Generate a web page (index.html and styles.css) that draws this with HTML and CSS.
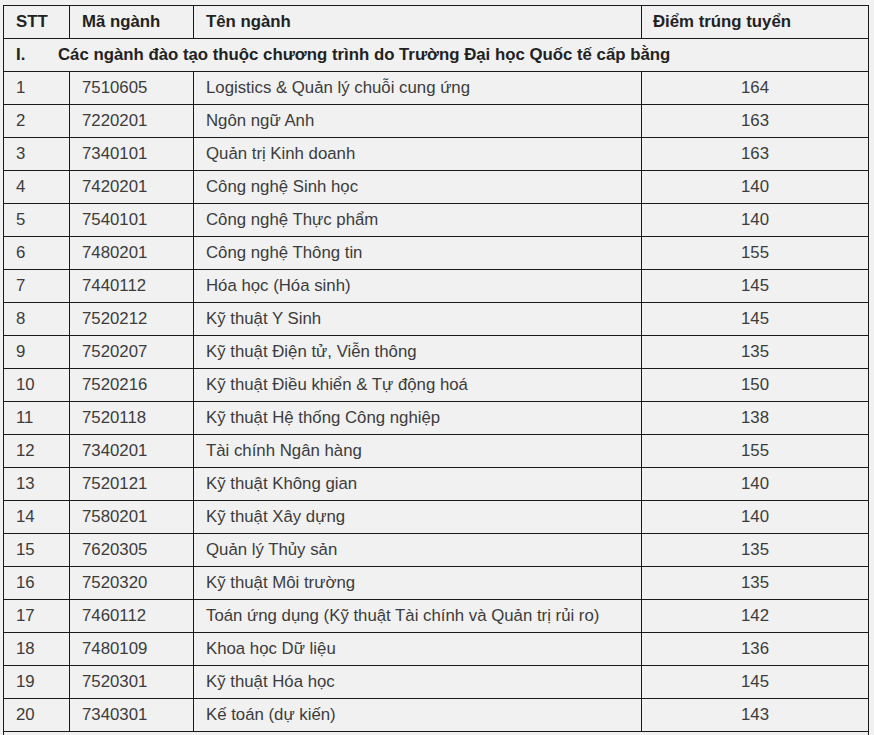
FILE: index.html
```html
<!DOCTYPE html>
<html lang="vi">
<head>
<meta charset="utf-8">
<link rel="stylesheet" href="styles.css">
</head>
<body>
<table class="scores">
<colgroup><col class="c-stt"><col class="c-code"><col class="c-name"><col class="c-score"></colgroup>
<thead>
<tr><th>STT</th><th>Mã ngành</th><th>Tên ngành</th><th>Điểm trúng tuyển</th></tr>
</thead>
<tbody>
<tr class="section"><td colspan="4"><span class="num">I.</span>Các ngành đào tạo thuộc chương trình do Trường Đại học Quốc tế cấp bằng</td></tr>
<tr><td>1</td><td>7510605</td><td>Logistics &amp; Quản lý chuỗi cung ứng</td><td class="score">164</td></tr>
<tr><td>2</td><td>7220201</td><td>Ngôn ngữ Anh</td><td class="score">163</td></tr>
<tr><td>3</td><td>7340101</td><td>Quản trị Kinh doanh</td><td class="score">163</td></tr>
<tr><td>4</td><td>7420201</td><td>Công nghệ Sinh học</td><td class="score">140</td></tr>
<tr><td>5</td><td>7540101</td><td>Công nghệ Thực phẩm</td><td class="score">140</td></tr>
<tr><td>6</td><td>7480201</td><td>Công nghệ Thông tin</td><td class="score">155</td></tr>
<tr><td>7</td><td>7440112</td><td>Hóa học (Hóa sinh)</td><td class="score">145</td></tr>
<tr><td>8</td><td>7520212</td><td>Kỹ thuật Y Sinh</td><td class="score">145</td></tr>
<tr><td>9</td><td>7520207</td><td>Kỹ thuật Điện tử, Viễn thông</td><td class="score">135</td></tr>
<tr><td>10</td><td>7520216</td><td>Kỹ thuật Điều khiển &amp; Tự động hoá</td><td class="score">150</td></tr>
<tr><td>11</td><td>7520118</td><td>Kỹ thuật Hệ thống Công nghiệp</td><td class="score">138</td></tr>
<tr><td>12</td><td>7340201</td><td>Tài chính Ngân hàng</td><td class="score">155</td></tr>
<tr><td>13</td><td>7520121</td><td>Kỹ thuật Không gian</td><td class="score">140</td></tr>
<tr><td>14</td><td>7580201</td><td>Kỹ thuật Xây dựng</td><td class="score">140</td></tr>
<tr><td>15</td><td>7620305</td><td>Quản lý Thủy sản</td><td class="score">135</td></tr>
<tr><td>16</td><td>7520320</td><td>Kỹ thuật Môi trường</td><td class="score">135</td></tr>
<tr><td>17</td><td>7460112</td><td>Toán ứng dụng (Kỹ thuật Tài chính và Quản trị rủi ro)</td><td class="score">142</td></tr>
<tr><td>18</td><td>7480109</td><td>Khoa học Dữ liệu</td><td class="score">136</td></tr>
<tr><td>19</td><td>7520301</td><td>Kỹ thuật Hóa học</td><td class="score">145</td></tr>
<tr><td>20</td><td>7340301</td><td>Kế toán (dự kiến)</td><td class="score">143</td></tr>
<tr class="section"><td colspan="4"></td></tr>
</tbody>
</table>
</body>
</html>
```

FILE: styles.css
```css
html, body {
  margin: 0;
  background: #f1f1f1;
}
body {
  padding: 5px 0 0 3px;
  font-family: "Liberation Sans", Arial, sans-serif;
  font-size: 16.8px;
  color: #3c3c3c;
  overflow: hidden;
}
.scores {
  border-collapse: collapse;
  table-layout: fixed;
  width: 865px;
  background: #f1f1f1;
}
.c-stt { width: 66px; }
.c-code { width: 124px; }
.c-name { width: 448px; }
.c-score { width: 227px; }
.scores th,
.scores td {
  border: 1px solid #1a1a1a;
  height: 32px;
  padding: 0 12px;
  text-align: left;
  vertical-align: middle;
  line-height: 20px;
  white-space: nowrap;
}
.scores th {
  font-weight: bold;
  color: #222;
}
.scores th:last-child {
  padding-left: 11px;
}
.scores td.score {
  text-align: center;
}
.section td {
  font-weight: bold;
  color: #222;
}
.section .num {
  display: inline-block;
  width: 42px;
}
```
